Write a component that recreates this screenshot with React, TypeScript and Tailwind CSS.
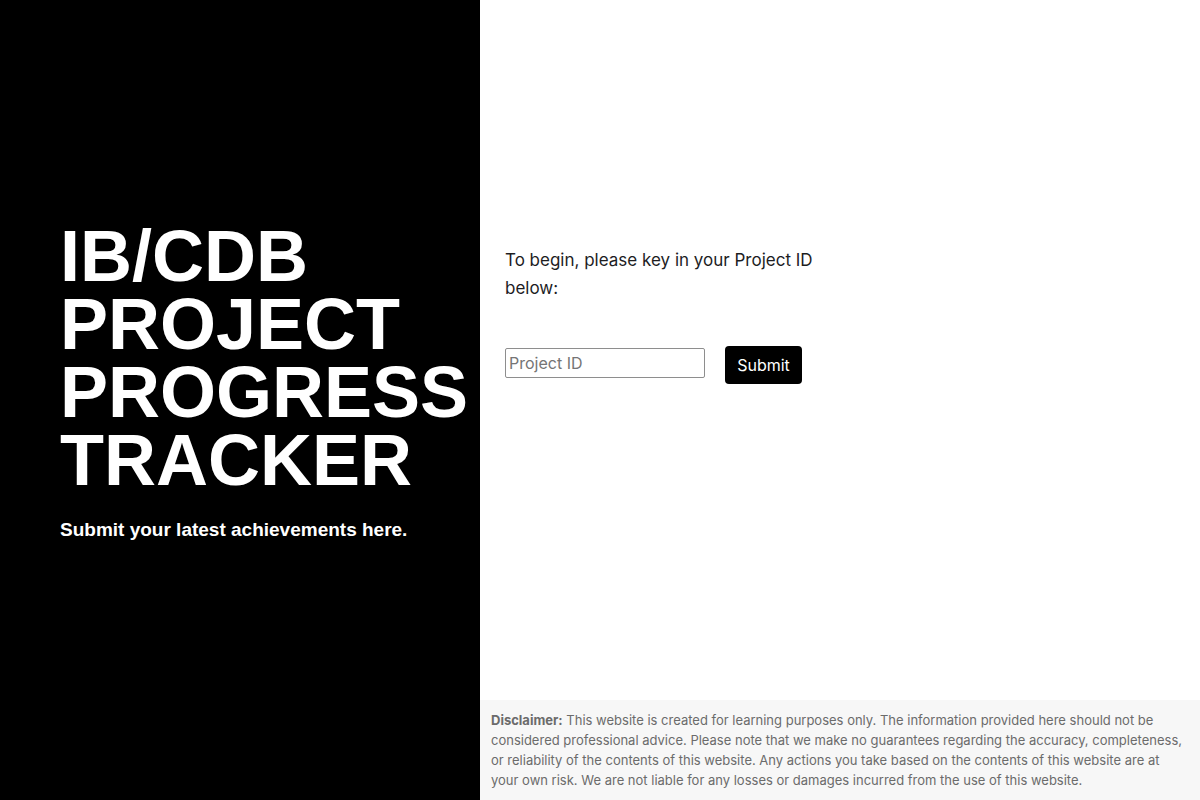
import { useState } from 'react';

export default function App() {
  const [projectId, setProjectId] = useState('');

  return (
    <div className="flex w-full h-[800px] overflow-hidden">
      {/* Left hero panel */}
      <div className="w-[480px] shrink-0 bg-black text-white px-[60px] pt-[222px] font-['Liberation_Sans',Arial,sans-serif]">
        <h1 className="text-[72px] leading-[68px] font-bold">
          IB/CDB
          <br />
          PROJECT
          <br />
          PROGRESS
          <br />
          TRACKER
        </h1>
        <p className="mt-[25px] text-[19px] leading-[22px] font-bold">
          Submit your latest achievements here.
        </p>
      </div>

      {/* Right form panel */}
      <div className="flex-1 flex flex-col bg-white font-['Inter','Noto_Sans',sans-serif]">
        <div className="flex-1 pl-[25px] pt-[246px]">
          <p className="w-[330px] text-[17px] leading-[28px] text-[#1d1d1f]">
            To begin, please key in your Project ID below:
          </p>
          <form
            className="flex items-start gap-5 mt-[44px]"
            onSubmit={(e) => e.preventDefault()}
          >
            <input
              type="text"
              value={projectId}
              onChange={(e) => setProjectId(e.target.value)}
              placeholder="Project ID"
              className="mt-[2px] w-[200px] h-[30px] border border-[#8e8e8e] rounded-[2px] px-[3px] text-[16px] text-black placeholder:text-[#757575] outline-none"
            />
            <button
              type="submit"
              className="h-[38px] w-[77px] bg-black text-white text-[16px] rounded-[4px]"
            >
              Submit
            </button>
          </form>
        </div>

        {/* Disclaimer */}
        <div className="h-[100px] bg-[#f7f7f7] px-[11px] pt-[10px] text-[13px] leading-[20px] text-[#6b6b6b]">
          <span className="font-bold">Disclaimer:</span> This website is created for learning purposes
          only. The information provided here should not be considered professional advice. Please
          note that we make no guarantees regarding the accuracy, completeness, or reliability of the
          contents of this website. Any actions you take based on the contents of this website are at
          your own risk. We are not liable for any losses or damages incurred from the use of this
          website.
        </div>
      </div>
    </div>
  );
}
